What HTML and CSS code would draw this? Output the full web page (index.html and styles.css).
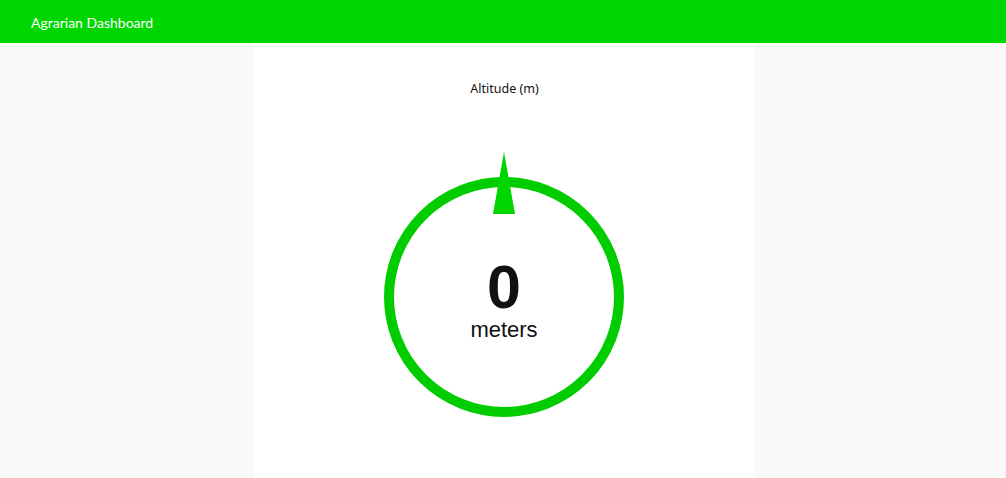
FILE: index.html
```html
<!DOCTYPE html>
<html>
<head>
<meta charset="utf-8">
<link rel="stylesheet" href="styles.css">
</head>
<body>
<header class="topbar">
  <span class="brand">Agrarian Dashboard</span>
</header>
<main class="page">
  <section class="card">
    <h2 class="card-title">Altitude (m)</h2>
    <svg class="gauge" width="250" height="270" viewBox="0 0 250 270">
      <circle cx="125" cy="147" r="115" fill="none" stroke="#00cc00" stroke-width="10"/>
      <polygon points="125,2 114,64 136,64" fill="#00d600"/>
      <text x="125" y="158" text-anchor="middle" class="gauge-value">0</text>
      <text x="125" y="187" text-anchor="middle" class="gauge-unit">meters</text>
    </svg>
  </section>
</main>
</body>
</html>
```
FILE: styles.css
```css
html, body {
  margin: 0;
  padding: 0;
  height: 100%;
}
body {
  background: #fafafa;
  font-family: "Open Sans", "Noto Sans", sans-serif;
  overflow: hidden;
}
.topbar {
  height: 43px;
  box-sizing: border-box;
  background: #00d600;
  display: flex;
  align-items: center;
  padding: 3px 0 0 31px;
}
.brand {
  color: #ffffff;
  font-size: 14px;
  font-family: Lato, "Noto Sans", sans-serif;
  line-height: 1;
}
.page {
  display: flex;
  justify-content: center;
  padding-left: 3px;
  height: calc(100% - 43px);
}
.card {
  width: 501px;
  background: #ffffff;
  display: flex;
  flex-direction: column;
  align-items: center;
  padding-top: 37px;
}
.card-title {
  margin: 0;
  font-weight: normal;
  font-size: 12.5px;
  line-height: 18px;
  color: #111;
  font-family: "Noto Sans", sans-serif;
}
.gauge {
  display: block;
  margin-top: 52px;
  margin-right: 1px;
}
.gauge-value {
  font-family: "Liberation Sans", Arial, sans-serif;
  font-weight: bold;
  font-size: 61px;
  fill: #111111;
}
.gauge-unit {
  font-family: "Liberation Sans", Arial, sans-serif;
  font-size: 22px;
  fill: #111111;
}
```
